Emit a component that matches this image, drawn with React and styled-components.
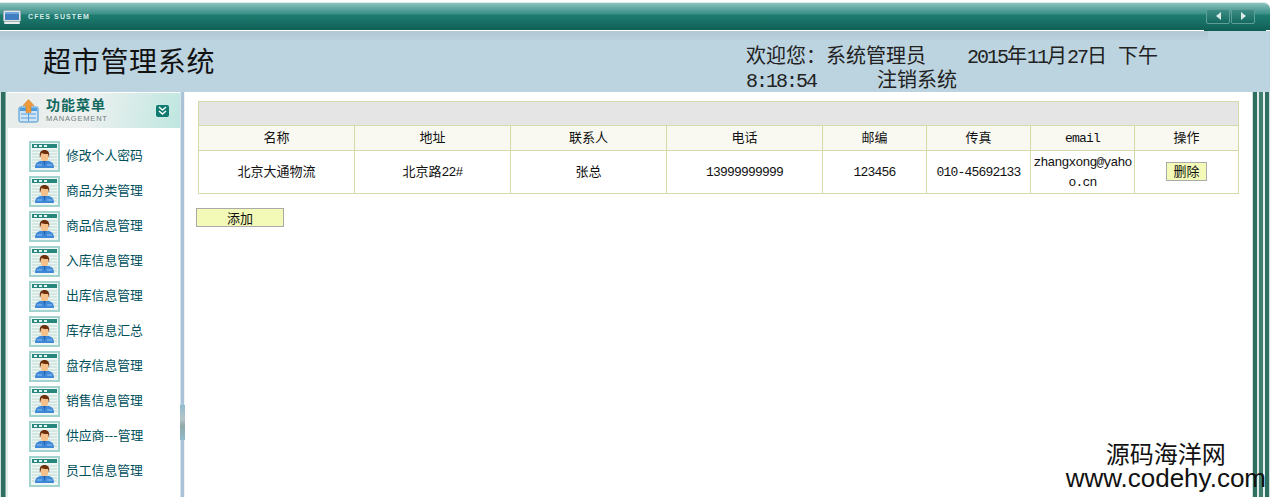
import React from 'react';
import styled, { createGlobalStyle } from 'styled-components';

const GlobalStyle = createGlobalStyle`
  html, body {
    margin: 0;
    padding: 0;
    background: #fff;
    font-family: "Liberation Mono", "Noto Sans CJK SC", monospace;
  }
`;

const Page = styled.div`
  position: relative;
  width: 1270px;
  height: 497px;
  overflow: hidden;
  display: flex;
  flex-direction: column;
`;

const TopBar = styled.div`
  flex: none;
  position: relative;
  height: 27px;
  margin-top: 3px;
  margin-bottom: 1px;
  padding: 0 15px 0 3px;
  display: flex;
  align-items: center;
  border-radius: 0 6px 0 0;
  box-shadow: 0 -1px 0 #dfe8e6;
  background: linear-gradient(#8cc4bf 0, #63aaa3 5px, #3a8f86 11px, #1f7c70 12px, #176e63 20px, #0f5f55 27px);

  &::after {
    content: "";
    position: absolute;
    right: 4px;
    bottom: -1px;
    width: 62px;
    height: 1px;
    background: #0f5f55;
  }
`;

const BarTitle = styled.span`
  margin-left: 7px;
  font: 700 7px "Liberation Sans", sans-serif;
  letter-spacing: 1.1px;
  color: #d8ecea;
`;

const NavButtons = styled.div`
  margin-left: auto;
  display: flex;
  gap: 1px;
  margin-top: -1px;
`;

const NavButton = styled.div`
  width: 24px;
  height: 15px;
  display: flex;
  align-items: center;
  justify-content: center;
  border: 1px solid #5f9f98;
  border-radius: 2px;
  box-sizing: border-box;
  background: linear-gradient(#3e8d84, #146a60);
`;

const Header = styled.div`
  flex: none;
  height: 61px;
  display: flex;
  color: #111;
  background:
    linear-gradient(#b3c8d3, #bad0dd) 0 0 / 1208px 9px no-repeat,
    #bcd3e0;
`;

const SystemName = styled.h1`
  margin: 11px 0 0 43px;
  width: 703px;
  font: 400 28px/36px "Noto Sans CJK SC", sans-serif;
  letter-spacing: 0.7px;
`;

const Welcome = styled.div`
  width: 425px;
  margin-top: 12px;
  font: 400 20px/24px "Noto Sans CJK SC", sans-serif;
  color: #222;
`;

const HeadNum = styled.span`
  font-family: "Liberation Mono", monospace;
  line-height: 0;
  letter-spacing: -2px;
`;

const Gap = styled.span`
  display: inline-block;
  width: ${(p) => p.$w}px;
`;

const Body = styled.div`
  flex: 1;
  display: flex;
  min-height: 0;
`;

const Stripes = styled.div`
  flex: none;
  width: 8px;
  background: linear-gradient(90deg, #cfe0dc 0 1px, #2f6f60 1px 5px, #7fa89e 5px 6px, #e5efec 6px 8px);
`;

const Sidebar = styled.div`
  flex: none;
  width: 172px;
  display: flex;
  flex-direction: column;
`;

const MenuHead = styled.div`
  height: 35px;
  margin-top: 1px;
  padding: 0 11px 0 10px;
  display: flex;
  align-items: center;
  background: linear-gradient(100deg, #e6ecea 0, #eef1f0 45%, #bfe6e0 100%);
`;

const HeadText = styled.div`
  margin-left: 6px;
  display: flex;
  flex-direction: column;
`;

const HeadTitle = styled.span`
  font: 700 14px/15px "Noto Sans CJK SC", sans-serif;
  letter-spacing: 1px;
  color: #11695f;
  margin-top: -1px;
`;

const HeadSub = styled.span`
  font: 400 7.5px/10px "Liberation Sans", sans-serif;
  letter-spacing: 0.8px;
  margin-top: 2px;
  color: #6f7f80;
`;

const Collapse = styled.div`
  margin-left: auto;
  width: 13px;
  height: 12px;
  border-radius: 2px;
  background: #0f7a70;
  display: flex;
  align-items: center;
  justify-content: center;
`;

const MenuList = styled.ul`
  list-style: none;
  margin: 13px 0 0;
  padding: 0 0 0 21px;
  display: flex;
  flex-direction: column;
  gap: 4px;
`;

const MenuItem = styled.li`
  height: 31px;
  display: flex;
  align-items: center;
  gap: 6px;
  font: 400 12.8px/16px "Noto Sans CJK SC", sans-serif;
  color: #00505c;
`;

const MenuLabel = styled.span`
  padding-bottom: 3px;
`;

const Splitter = styled.div`
  flex: none;
  position: relative;
  width: 5px;
  background: linear-gradient(90deg, #d8e4ec 0 1px, #a9c2d8 1px 4px, #eef3f6 4px 5px);
`;

const Grip = styled.div`
  position: absolute;
  top: 313px;
  left: 0;
  width: 5px;
  height: 35px;
  background: linear-gradient(#8fbccb 0, #b5c4c8 40%, #8fa9a8 60%, #8fbccb 100%);
`;

const Main = styled.main`
  flex: 1;
  padding: 9px 13px 0 11px;
`;

const Grid = styled.table`
  margin-left: 2px;
  width: 1041px;
  border-collapse: collapse;
  table-layout: fixed;
  font: 400 13px/20px "Noto Sans CJK SC", sans-serif;
  color: #111;

  td, th {
    border: 1px solid #d3dba8;
    padding: 0 0 2px;
    text-align: center;
    font-weight: 400;
  }
`;

const CaptionCell = styled.td`
  height: 21px;
  background: #e5e5e5;
`;

const HeaderRow = styled.tr`
  height: 25px;
  background: #f9f9f2;
`;

const DataRow = styled.tr`
  height: 43px;
`;

const Latin = styled.span`
  font-family: "Liberation Mono", monospace;
  line-height: 0;
  letter-spacing: -0.8px;
  word-break: break-all;
`;

const YellowButton = styled.button`
  display: block;
  box-sizing: border-box;
  padding: 0;
  background: #f3f9b7;
  border: 1px solid #aaa;
  color: #111;
  font: 400 13px/16px "Noto Sans CJK SC", sans-serif;
  width: ${(p) => p.$w}px;
  height: ${(p) => p.$h}px;
  margin: ${(p) => p.$margin};
`;

const RightStripes = styled.div`
  flex: none;
  width: 18px;
  background: linear-gradient(90deg, #cfe0dc 0 1px, #2f6f60 1px 5px, #dfe9e6 5px 7px, #3f7f70 7px 11px, #e5efec 11px 13px, #2f6f60 13px 17px, #cfe0dc 17px 18px);
`;

const Watermark = styled.div`
  position: absolute;
  right: 4px;
  bottom: 8px;
  text-align: center;
  color: #111;
  font-family: "Liberation Sans", "Noto Sans CJK SC", sans-serif;
`;

const MarkName = styled.div`
  font-size: 24px;
  line-height: 24px;
`;

const MarkUrl = styled.div`
  font-size: 26px;
  line-height: 22px;
`;

const MonitorIcon = () => (
  <svg width="18" height="14" viewBox="0 0 18 14">
    <rect x="0.5" y="0.5" width="17" height="11" rx="1.5" fill="#dfe7ea" stroke="#9fb0b4" />
    <rect x="2" y="2" width="14" height="8" fill="#3f7fc0" />
    <rect x="2" y="2" width="14" height="2" fill="#6fa8dc" />
    <rect x="1" y="12" width="16" height="2" rx="1" fill="#e8eeee" />
  </svg>
);

const Arrow = ({ left }) => (
  <svg width="7" height="8" viewBox="0 0 7 8">
    <path d={left ? 'M6 0v8L1 4z' : 'M1 0v8l5-4z'} fill="#dcebe8" />
  </svg>
);

const MenuBadge = () => (
  <svg width="22" height="24" viewBox="0 0 22 24">
    <rect x="1" y="8" width="19" height="15" rx="1.500" fill="#cfe4f5" stroke="#3f8fd0" />
    <rect x="2" y="9" width="17" height="3" fill="#4f9fe0" />
    <path d="M3 15h15M3 19h15M10.500 14v8" stroke="#5aa0d8" fill="none" />
    <path d="M10.500 0.500l5.500 6h-3v7h-5v-7h-3z" fill="#ee9a3a" stroke="#d07a20" strokeWidth="0.500" />
  </svg>
);

const Chevrons = () => (
  <svg width="9" height="9" viewBox="0 0 9 9">
    <path d="M1 1l3.500 3 3.500-3M1 5l3.500 3 3.500-3" stroke="#fff" strokeWidth="1.500" fill="none" />
  </svg>
);

const UserIcon = () => (
  <svg width="31" height="31" viewBox="0 0 31 31">
    <rect x="1" y="1" width="29" height="29" fill="#eef6f3" stroke="#a3d3ce" strokeWidth="2" />
    <rect x="3" y="3" width="25" height="4" fill="#27877d" />
    <path d="M5 5h3M10 5h3M15 5h3" stroke="#e6f4f1" strokeWidth="2" />
    <path d="M3 10h25M3 13h25M3 16h25M3 19h25M3 22h25M3 25h25" stroke="#bcd8d1" />
    <path d="M6 27c0-5 3-7 6-7h7c3 0 6 2 6 7z" fill="#3f88d8" />
    <path d="M8 24h5M18 24h5" stroke="#8fc0ee" />
    <path d="M14.500 20h2l-1 5z" fill="#1f5fa8" />
    <rect x="12" y="12" width="7" height="8" rx="2" fill="#f5c08a" />
    <path d="M11 17c-1-6 1-8 4.500-8s5.500 2 4.500 8l-1-4c-2 0-5 0-6.500-1z" fill="#6e2f0c" />
  </svg>
);

const menus = [
  '修改个人密码',
  '商品分类管理',
  '商品信息管理',
  '入库信息管理',
  '出库信息管理',
  '库存信息汇总',
  '盘存信息管理',
  '销售信息管理',
  '供应商---管理',
  '员工信息管理',
];

const columns = [
  ['名称', 156],
  ['地址', 156],
  ['联系人', 156],
  ['电话', 156],
  ['邮编', 104],
  ['传真', 104],
  ['email', 104],
  ['操作', 104],
];

const App = () => (
  <Page>
    <GlobalStyle />
    <TopBar>
      <MonitorIcon />
      <BarTitle>CFES SUSTEM</BarTitle>
      <NavButtons>
        <NavButton><Arrow left /></NavButton>
        <NavButton><Arrow /></NavButton>
      </NavButtons>
    </TopBar>
    <Header>
      <SystemName>超市管理系统</SystemName>
      <Welcome>
        欢迎您{'\uFF1A'}系统管理员<Gap $w={41} />
        <HeadNum>2015</HeadNum>年<HeadNum>11</HeadNum>月<HeadNum>27</HeadNum>日<Gap $w={11} />下午{' '}
        <HeadNum>8:18:54</HeadNum><Gap $w={61} />注销系统
      </Welcome>
    </Header>
    <Body>
      <Stripes />
      <Sidebar>
        <MenuHead>
          <MenuBadge />
          <HeadText>
            <HeadTitle>功能菜单</HeadTitle>
            <HeadSub>MANAGEMENT</HeadSub>
          </HeadText>
          <Collapse><Chevrons /></Collapse>
        </MenuHead>
        <MenuList>
          {menus.map((name) => (
            <MenuItem key={name}>
              <UserIcon />
              <MenuLabel>{name}</MenuLabel>
            </MenuItem>
          ))}
        </MenuList>
      </Sidebar>
      <Splitter><Grip /></Splitter>
      <Main>
        <Grid>
          <colgroup>
            {columns.map(([name, w]) => <col key={name} width={w} />)}
          </colgroup>
          <tbody>
            <tr><CaptionCell colSpan={8} /></tr>
            <HeaderRow>
              {columns.map(([name]) => (
                <th key={name}>{name === 'email' ? <Latin>{name}</Latin> : name}</th>
              ))}
            </HeaderRow>
            <DataRow>
              <td>北京大通物流</td>
              <td>北京路<Latin>22#</Latin></td>
              <td>张总</td>
              <td><Latin>13999999999</Latin></td>
              <td><Latin>123456</Latin></td>
              <td><Latin>010-45692133</Latin></td>
              <td><Latin>zhangxong@yahoo.cn</Latin></td>
              <td><YellowButton $w={41} $h={19} $margin="0 auto">删除</YellowButton></td>
            </DataRow>
          </tbody>
        </Grid>
        <YellowButton $w={88} $h={19} $margin="14px 0 0">添加</YellowButton>
      </Main>
      <RightStripes />
    </Body>
    <Watermark>
      <MarkName>源码海洋网</MarkName>
      <MarkUrl>www.codehy.com</MarkUrl>
    </Watermark>
  </Page>
);

export default App;
